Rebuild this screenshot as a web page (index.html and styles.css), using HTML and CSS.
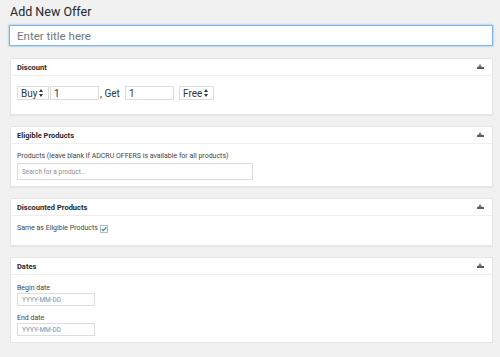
FILE: index.html
```html
<!DOCTYPE html>
<html lang="en">
<head>
    <meta charset="UTF-8">
    <title>Add New Offer</title>
    <link rel="stylesheet" href="styles.css">
</head>
<body>
    <div class="wrap">
        <h1 class="page-title">Add New Offer</h1>
        <input type="text" class="title-input" placeholder="Enter title here">

        <div class="postbox">
            <div class="postbox-header">
                <h2>Discount</h2>
                <span class="toggle"></span>
            </div>
            <div class="inside discount-row">
                <span class="select select-buy">Buy <span class="arrows"></span></span>
                <input type="text" class="num-input" value="1">
                <span class="get-label">, Get</span>
                <input type="text" class="num-input" value="1">
                <span class="select select-free">Free <span class="arrows"></span></span>
            </div>
        </div>

        <div class="postbox">
            <div class="postbox-header">
                <h2>Eligible Products</h2>
                <span class="toggle"></span>
            </div>
            <div class="inside products">
                <label class="field-label">Products (leave blank if ADCRU OFFERS is available for all products)</label>
                <input type="text" class="search-input" placeholder="Search for a product...">
            </div>
        </div>

        <div class="postbox">
            <div class="postbox-header">
                <h2>Discounted Products</h2>
                <span class="toggle"></span>
            </div>
            <div class="inside same-row">
                <span class="field-label">Same as Eligible Products</span>
                <span class="checkbox">
                    <svg width="7" height="6" viewBox="0 0 7 6"><path d="M0.8 3.2 L2.6 5 L6.2 0.8" fill="none" stroke="#1e8cbe" stroke-width="1.4"/></svg>
                </span>
            </div>
        </div>

        <div class="postbox">
            <div class="postbox-header">
                <h2>Dates</h2>
                <span class="toggle"></span>
            </div>
            <div class="inside dates">
                <label class="field-label">Begin date</label>
                <input type="text" class="date-input" placeholder="YYYY-MM-DD">
                <label class="field-label end-label">End date</label>
                <input type="text" class="date-input" placeholder="YYYY-MM-DD">
            </div>
        </div>
    </div>
</body>
</html>
```

FILE: styles.css
```css
* {
    margin: 0;
    padding: 0;
    box-sizing: border-box;
}

body {
    font-family: Roboto, "Liberation Sans", Arial, sans-serif;
    background-color: #f1f1f1;
    color: #23282d;
}

.wrap {
    display: flex;
    flex-direction: column;
    padding: 4px 7px 0 9px;
}

.page-title {
    font-size: 12.5px;
    font-weight: 400;
    line-height: 15px;
    margin-left: 1px;
    color: #23282d;
}

.title-input {
    margin-top: 6px;
    height: 21px;
    width: 484px;
    border: 1px solid #7eb4ea;
    box-shadow: 0 0 2px rgba(30, 140, 190, 0.6);
    padding: 0 7px;
    font-family: inherit;
    font-size: 11.5px;
    outline: none;
    background: #fff;
}

.title-input::placeholder {
    color: #72777c;
}

.postbox {
    margin-left: 1px;
    width: 483px;
    background: #fff;
    border: 1px solid #e5e5e5;
    box-shadow: 0 1px 1px rgba(0, 0, 0, 0.04);
    margin-top: 12px;
}

.postbox + .postbox {
    margin-top: 11px;
}

.postbox-header {
    height: 17px;
    display: flex;
    align-items: center;
    justify-content: space-between;
    padding: 0 8px 0 6px;
    border-bottom: 1px solid #eee;
}

.postbox-header h2 {
    font-size: 7.5px;
    font-weight: 700;
    color: #23282d;
}

.toggle {
    width: 7px;
    height: 6px;
    position: relative;
}

.toggle::before {
    content: "";
    position: absolute;
    left: 1px;
    top: 0;
    border-left: 2.5px solid transparent;
    border-right: 2.5px solid transparent;
    border-bottom: 3px solid #72777c;
}

.toggle::after {
    content: "";
    position: absolute;
    left: 0;
    top: 3px;
    width: 7px;
    height: 2px;
    background: #555d66;
}

.inside {
    padding: 0 6px;
}

.discount-row {
    display: flex;
    align-items: center;
    height: 38px;
    padding-bottom: 4px;
    padding-left: 6px;
    font-size: 10px;
    color: #32373c;
}

.select {
    height: 14px;
    border: 1px solid #ddd;
    display: flex;
    align-items: center;
    padding: 0 2px 0 3px;
    font-size: 10px;
    gap: 2px;
    background: #fff;
}

.select-buy {
    width: 32px;
}

.select-free {
    width: 35px;
    margin-left: 5px;
}

.arrows {
    width: 5px;
    height: 8px;
    position: relative;
}

.arrows::before,
.arrows::after {
    content: "";
    position: absolute;
    left: 0;
    border-left: 2.5px solid transparent;
    border-right: 2.5px solid transparent;
}

.arrows::before {
    top: 0;
    border-bottom: 3px solid #32373c;
}

.arrows::after {
    bottom: 0;
    border-top: 3px solid #32373c;
}

.num-input {
    width: 49px;
    height: 14px;
    margin-left: 1px;
    border: 1px solid #ddd;
    padding: 0 3px;
    font-family: inherit;
    font-size: 10px;
    color: #32373c;
    outline: none;
}

.get-label {
    width: 25px;
    padding-left: 1px;
    font-size: 10px;
}

.field-label {
    font-size: 7px;
    color: #444;
    line-height: 9px;
}

.products {
    padding-top: 8px;
    padding-bottom: 6px;
    display: flex;
    flex-direction: column;
    gap: 2px;
}

.search-input {
    width: 236px;
    height: 17px;
    border: 1px solid #ddd;
    padding: 0 4px;
    font-family: inherit;
    font-size: 6.5px;
    outline: none;
}

.search-input::placeholder,
.date-input::placeholder {
    color: #8a8f94;
}

.same-row {
    height: 29px;
    display: flex;
    align-items: center;
    gap: 2px;
    padding-bottom: 4px;
}

.checkbox {
    width: 8px;
    height: 8px;
    border: 1px solid #b4b9be;
    display: flex;
    align-items: center;
    justify-content: center;
}

.dates {
    padding-top: 9px;
    padding-bottom: 6px;
    display: flex;
    flex-direction: column;
}

.date-input {
    margin-top: 0;
    width: 78px;
    height: 13px;
    border: 1px solid #ddd;
    padding: 0 4px;
    font-family: inherit;
    font-size: 6.5px;
    outline: none;
}

.end-label {
    margin-top: 8px;
}
```
